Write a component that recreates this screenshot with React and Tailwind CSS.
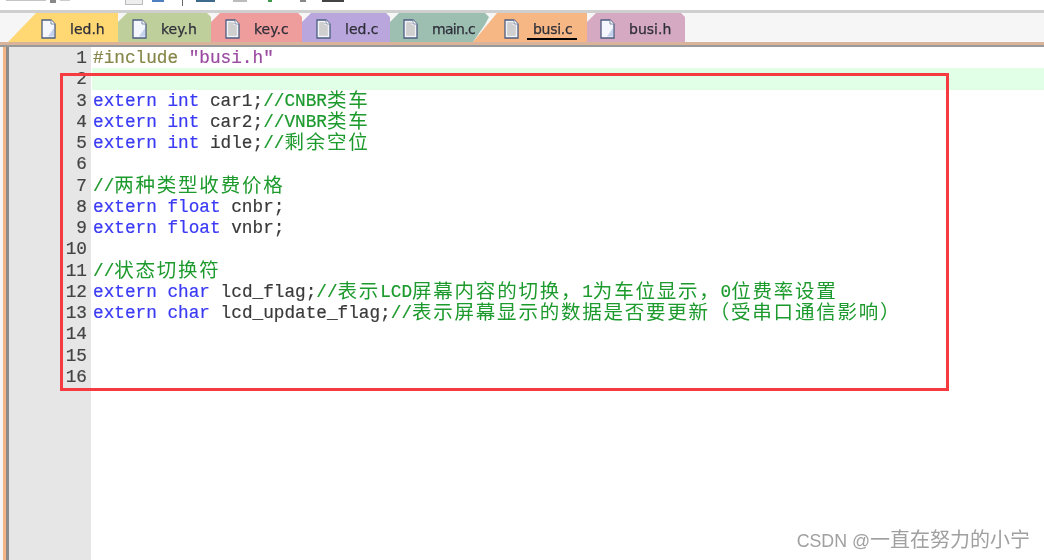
const tabs = [
  { name: "led.h", bg: "bg-[#ffd873]", width: "w-[110px]", pad: "pl-[33px]", shape: "[clip-path:polygon(0_100%,28px_0,100%_0,100%_100%)]" },
  { name: "key.h", bg: "bg-[#bfcf9c]", width: "w-[93px]", pad: "pl-[14px]", shape: "[clip-path:polygon(0_100%,0_9px,9px_0,calc(100%-4px)_0,100%_4px,100%_100%)]" },
  { name: "key.c", bg: "bg-[#ef9c9c]", width: "w-[91px]", pad: "pl-[14px]", dirty: true, shape: "[clip-path:polygon(0_100%,0_9px,9px_0,calc(100%-4px)_0,100%_4px,100%_100%)]" },
  { name: "led.c", bg: "bg-[#b8a6dc]", width: "w-[88px]", pad: "pl-[14px]", dirty: true, shape: "[clip-path:polygon(0_100%,0_9px,9px_0,calc(100%-4px)_0,100%_4px,100%_100%)]" },
  { name: "main.c", bg: "bg-[#9dbfb2]", width: "w-[99px]", pad: "pl-[13px]", dirty: true, label: "tracking-[-0.7px]", shape: "[clip-path:polygon(0_100%,0_9px,9px_0,calc(100%-4px)_0,100%_4px,calc(100%-4px)_40%,calc(100%-16px)_100%)]" },
  { name: "busi.c", bg: "bg-[#f7b784]", width: "w-[114px]", pad: "pl-[31px]", dirty: true, active: true, label: "tracking-[-0.3px] [-webkit-text-stroke:0.5px_#1f1f28]", shape: "[clip-path:polygon(0_100%,24px_0,100%_0,100%_100%)]", extra: "-ml-[16px]" },
  { name: "busi.h", bg: "bg-[#d5a9c1]", width: "w-[98px]", pad: "pl-[13px]", shape: "[clip-path:polygon(0_100%,0_9px,9px_0,calc(100%-4px)_0,100%_4px,100%_100%)]" },
];

const kw = "text-[#3a3af5]";
const plain = "text-[#3a3a3a]";
const cm = "text-[#1d9a2d]";

// one entry per editor line, each a list of [colour, text]
const lines = [
  [["text-[#86864a]", "#include "], ["text-[#9a4aa0]", '"busi.h"']],
  [],
  [[kw, "extern int "], [plain, "car1;"], [cm, "//CNBR类车"]],
  [[kw, "extern int "], [plain, "car2;"], [cm, "//VNBR类车"]],
  [[kw, "extern int "], [plain, "idle;"], [cm, "//剩余空位"]],
  [],
  [[cm, "//两种类型收费价格"]],
  [[kw, "extern float "], [plain, "cnbr;"]],
  [[kw, "extern float "], [plain, "vnbr;"]],
  [],
  [[cm, "//状态切换符"]],
  [[kw, "extern char "], [plain, "lcd_flag;"], [cm, "//表示LCD屏幕内容的切换，1为车位显示，0位费率设置"]],
  [[kw, "extern char "], [plain, "lcd_update_flag;"], [cm, "//表示屏幕显示的数据是否要更新（受串口通信影响）"]],
  [],
  [],
  [],
];

function FileIcon({ dirty }) {
  return (
    <svg width="15" height="20" viewBox="0 0 15 20" className="shrink-0">
      <path d="M1 1h9l4 4v14H1z" fill="#f4f7fd" stroke="#4c5d80" strokeWidth="1.3" />
      <path d="M10 1v4h4" fill="#fff" stroke="#7d8aa5" strokeWidth="1" />
      {dirty ? (
        <path d="M3 3h6v3h3v11H3z" fill="#cfcfcf" stroke="#e8e8e8" strokeWidth="1" strokeDasharray="1 1" />
      ) : (
        <path d="M7 17.5h6V9z" fill="#c4d2ee" />
      )}
    </svg>
  );
}

function CodeText({ text }) {
  const parts = text.split(/([\u3000-\u9fff\uff00-\uffef]+)/);
  return parts.map((part, i) =>
    i % 2 === 1 ? (
      <span
        key={i}
        className="relative top-[1px] font-['Noto_Sans_CJK_SC',sans-serif] text-[19.5px] leading-[0] tracking-[1.77px] [-webkit-text-stroke:0px]"
      >
        {part}
      </span>
    ) : (
      part
    ),
  );
}

export default function App() {
  return (
    <div className="relative flex h-[560px] w-[1044px] flex-col overflow-hidden bg-white blur-[0.4px]">
      {/* what is left of the toolbar */}
      <div className="flex h-[10px] shrink-0 items-start pl-[6px]">
        <div className="h-[1px] w-[40px] bg-[#c4c4c4]" />
        <div className="ml-[4px] h-[3px] w-[6px] bg-[#888]" />
        <div className="ml-[4px] h-[1px] w-[10px] bg-[#ccc]" />
        <div className="ml-[55px] h-[5px] w-[18px] border-x border-b border-[#bbb] bg-[#eee]" />
        <div className="ml-[9px] h-[2px] w-[12px] bg-[#4f7fc0]" />
        <div className="ml-[18px] h-[6px] w-[1px] bg-[#666]" />
        <div className="ml-[13px] h-[2px] w-[19px] bg-[#3d6a8a]" />
        <div className="ml-[18px] h-[2px] w-[14px] bg-[#bbb]" />
        <div className="ml-[21px] h-[2px] w-[4px] bg-[#3c9a4a]" />
        <div className="ml-[28px] h-[2px] w-[6px] bg-[#888]" />
        <div className="ml-[16px] h-[2px] w-[22px] bg-[#444]" />
      </div>

      {/* tab strip */}
      <div className="h-[3px] shrink-0 bg-[#cfcfcf]" />
      <div className="flex h-[29px] shrink-0 items-stretch bg-[#f6f6f6] pl-[8px]">
        {tabs.map((tab) => (
          <div
            key={tab.name}
            className={`relative flex items-center gap-[14px] pt-[2px] ${tab.bg} ${tab.width} ${tab.pad} ${tab.shape} ${tab.extra || ""}`}
          >
            <FileIcon dirty={tab.dirty} />
            <span
              className={`mt-[1px] font-['DejaVu_Sans',sans-serif] text-[14px] text-[#2f2f3a] [-webkit-text-stroke:0.25px_#2f2f3a] ${tab.label || ""}`}
            >
              {tab.name}
            </span>
            {tab.active ? <div className="absolute bottom-[2px] left-[54px] h-[2px] w-[50px] bg-black" /> : null}
          </div>
        ))}
      </div>
      <div className="h-[3px] shrink-0 bg-[#d9b49b]" />
      <div className="h-[2px] shrink-0 bg-[#9a9a9a]" />

      {/* editor */}
      <div className="flex flex-1 font-['Liberation_Mono',monospace] text-[17.73px] [-webkit-text-stroke:0.2px]">
        <div className="w-[3px] bg-[#f6f6f6]" />
        <div className="w-[3px] bg-[#f4b483]" />
        <div className="w-[3px] bg-[#8c8c8c]" />
        <div className="w-[82px] bg-[#e6e6e6] pr-[4px] text-right text-[#444]">
          {lines.map((_, i) => (
            <div key={i} className="h-[21.27px] leading-[23.27px]">{i + 1}</div>
          ))}
        </div>
        <div className="flex-1 pl-[1px]">
          {lines.map((line, i) => (
            <div
              key={i}
              className={`h-[21.27px] whitespace-pre pl-[1px] leading-[23.27px] ${i === 1 ? "bg-[#e0ffe6]" : ""}`}
            >
              {line.map(([color, text], j) => (
                <span key={j} className={color}>
                  <CodeText text={text} />
                </span>
              ))}
            </div>
          ))}
        </div>
      </div>

      {/* red marker drawn over the code */}
      <div className="absolute left-[60px] top-[73px] h-[318px] w-[889px] border-[3px] border-[#f53b3f]" />

      <div className="absolute right-[14px] top-[528px] font-['Liberation_Sans',sans-serif] text-[17.8px] text-[#a0a0a0]">
        CSDN @<span className="font-['Noto_Sans_CJK_SC',sans-serif] text-[20px] leading-[0]">一直在努力的小宁</span>
      </div>
    </div>
  );
}
